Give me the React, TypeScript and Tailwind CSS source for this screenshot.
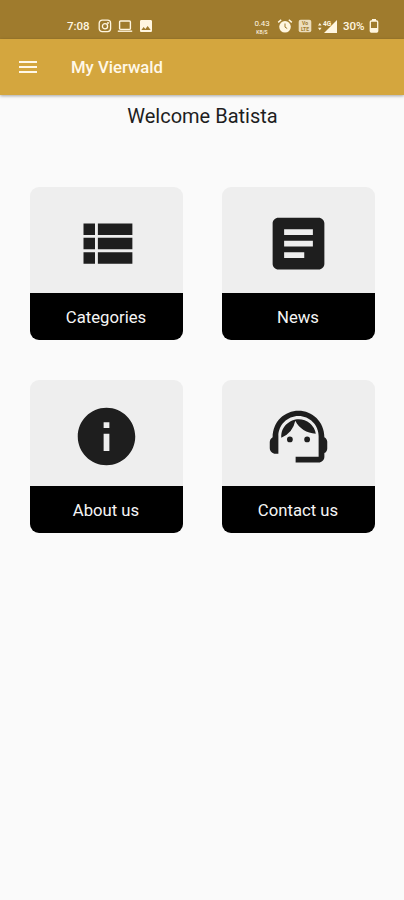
import type { ReactNode } from "react";
import { MdArticle, MdImage, MdInfo, MdMenu, MdSupportAgent } from "react-icons/md";

function ViewList() {
  return (
    <svg viewBox="0 0 24 24" className="size-[69px]" fill="currentColor">
      <path d="M4 14h4v-4H4v4zm0 5h4v-4H4v4zM4 9h4V5H4v4zm5 5h12v-4H9v4zm0 5h12v-4H9v4zM9 5v4h12V5H9z" />
    </svg>
  );
}

function StatusBar() {
  return (
    <div className="flex h-[39px] items-start bg-[#9f7b2d] pl-[67px] pt-[19px] text-[#fff6e0]">
      <span className="w-[31px] text-[11.5px] font-medium leading-[15px]">7:08</span>
      <svg viewBox="0 0 14 14" className="size-[14px]" fill="none" stroke="currentColor" strokeWidth="1.3">
        <rect x="1.2" y="1.2" width="11.4" height="11.4" rx="3" />
        <circle cx="7" cy="7.2" r="2.6" />
        <circle cx="10" cy="4" r="0.4" />
      </svg>
      <svg viewBox="0 0 16 14" className="ml-[5px] h-[14px] w-4" fill="none" stroke="currentColor" strokeWidth="1.4">
        <rect x="2.6" y="2" width="10.8" height="8.4" rx="1" />
        <path d="M0.8 12.2h14.4" />
      </svg>
      <MdImage className="-mt-px ml-[5px] size-[16px]" />
      <div className="ml-[98px] flex w-[20px] flex-col items-center">
        <span className="text-[8px] leading-[9px] tracking-[-0.1px]">0.43</span>
        <span className="mt-px text-[5px] font-medium leading-[6px]">KB/S</span>
      </div>
      <svg viewBox="0 0 16 16" className="-mt-px ml-[5px] size-4" fill="currentColor">
        <circle cx="8" cy="8.8" r="5.8" />
        <path d="M1.2 4.4 4.2 1.8M14.8 4.4l-3-2.6" stroke="currentColor" strokeWidth="1.5" />
        <path d="M8 5.5v3.6l2.2 1.4" fill="none" stroke="#9f7b2d" strokeWidth="1" />
      </svg>
      <svg viewBox="0 0 14 14" className="ml-[5px] size-[14px]" fontSize="5" fontWeight="700">
        <rect x="0.7" y="0.7" width="12.6" height="12.6" rx="2" fill="currentColor" fillOpacity="0.8" />
        <text x="7" y="6" textAnchor="middle" fill="#9f7b2d">Vo</text>
        <text x="7" y="12" textAnchor="middle" fill="#9f7b2d">LTE</text>
      </svg>
      <svg viewBox="0 0 21 15" className="ml-[5px] h-[15px] w-[21px]" fill="currentColor">
        <path d="M1 6.4 2.8 4l1.8 2.4zM1 8.8l1.8 2.4 1.8-2.4z" />
        <path d="M20 1v13H7z" />
        <text x="6" y="6.6" fontSize="6.5" fontWeight="700">4G</text>
      </svg>
      <span className="ml-[5px] w-[25px] text-[11.5px] font-medium leading-[15px]">30%</span>
      <svg viewBox="0 0 10 14" className="ml-px h-[14px] w-[10px]" fill="currentColor">
        <path d="M3 0h4v2H3z" />
        <rect x="1.3" y="2" width="7.4" height="11" rx="1" fill="none" stroke="currentColor" strokeWidth="1.3" />
        <path d="M1 9h8v4H1z" />
      </svg>
    </div>
  );
}

function Tile({ label, children }: { label: string; children: ReactNode }) {
  return (
    <button className="flex h-[153px] w-[153px] flex-col overflow-hidden rounded-[9px] bg-[#eeeeee]">
      <span className="flex h-[106px] w-full items-center justify-center pt-[7px] text-[#1e1e1e]">{children}</span>
      <span className="flex h-[47px] w-full items-center justify-center bg-black pr-px pt-[2px] text-[16.7px] text-[#f5f5f5]">
        {label}
      </span>
    </button>
  );
}

export default function App() {
  return (
    <main className="h-[900px] w-[404px] overflow-hidden bg-[#fafafa] font-[Roboto,sans-serif]">
      <StatusBar />
      <header className="flex h-[56px] items-center bg-[#d4a63e] pl-[16px] text-[#fff8e8] shadow-[0_1px_3px_rgba(0,0,0,0.35)]">
        <MdMenu className="size-[24px]" />
        <h1 className="ml-[31px] pt-px text-[16.7px] font-medium">My Vierwald</h1>
      </header>
      <h2 className="mt-[8px] pl-px text-center text-[20px] leading-[27px] text-[#1e1e1e]">Welcome Batista</h2>
      <section className="mt-[57px] grid grid-cols-[153px_153px] gap-x-[39px] gap-y-[40px] pl-[30px]">
        <Tile label="Categories"><ViewList /></Tile>
        <Tile label="News"><MdArticle className="size-[69px]" /></Tile>
        <Tile label="About us"><MdInfo className="size-[69px]" /></Tile>
        <Tile label="Contact us"><MdSupportAgent className="size-[69px]" /></Tile>
      </section>
    </main>
  );
}
